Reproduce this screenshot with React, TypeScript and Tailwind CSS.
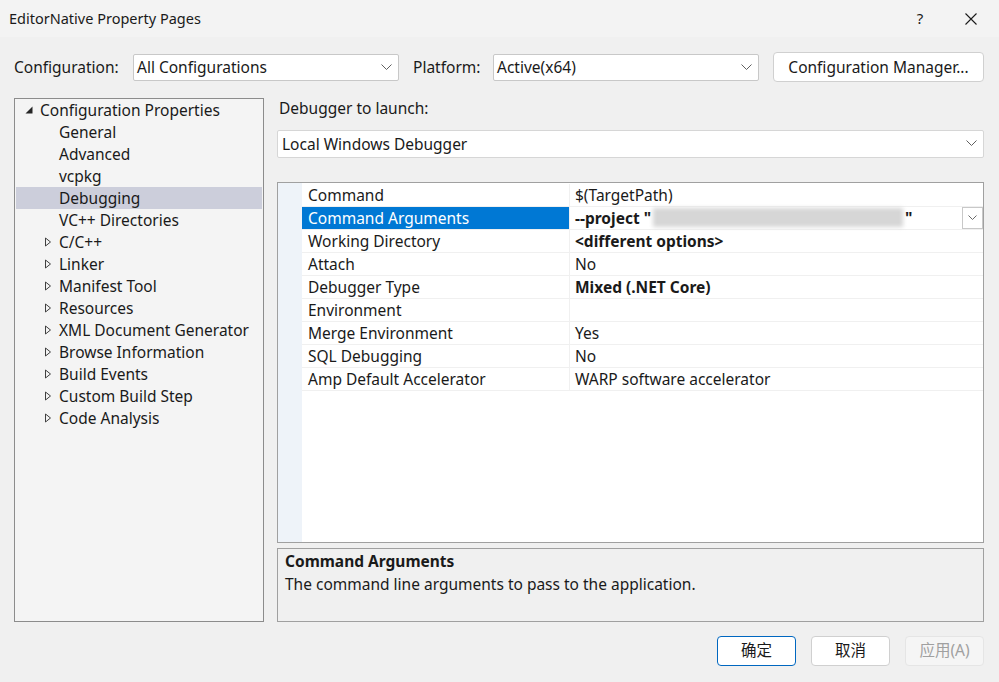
import React from "react";

const font = { fontFamily: '"Noto Sans", "Noto Sans CJK SC", sans-serif' };

const Chevron = () => (
  <svg width="11" height="7" viewBox="0 0 11 7" className="shrink-0">
    <path d="M0.5 0.5 L5.5 5.5 L10.5 0.5" fill="none" stroke="#5f5f5f" strokeWidth="1" />
  </svg>
);

const Collapsed = () => (
  <svg width="8" height="10" viewBox="0 0 8 10" className="shrink-0">
    <path d="M1.5 1 L6.5 5 L1.5 9 Z" fill="none" stroke="#404040" strokeWidth="1" />
  </svg>
);

const Expanded = () => (
  <svg width="8" height="8" viewBox="0 0 8 8" className="shrink-0">
    <path d="M7.5 0.5 L7.5 7.5 L0.5 7.5 Z" fill="#262626" />
  </svg>
);

const treeChildren = ["General", "Advanced", "vcpkg", "Debugging", "VC++ Directories"];
const treeGroups = [
  "C/C++",
  "Linker",
  "Manifest Tool",
  "Resources",
  "XML Document Generator",
  "Browse Information",
  "Build Events",
  "Custom Build Step",
  "Code Analysis",
];

const props: { name: string; value: string; bold?: boolean }[] = [
  { name: "Command", value: "$(TargetPath)" },
  { name: "Command Arguments", value: "" },
  { name: "Working Directory", value: "<different options>", bold: true },
  { name: "Attach", value: "No" },
  { name: "Debugger Type", value: "Mixed (.NET Core)", bold: true },
  { name: "Environment", value: "" },
  { name: "Merge Environment", value: "Yes" },
  { name: "SQL Debugging", value: "No" },
  { name: "Amp Default Accelerator", value: "WARP software accelerator" },
];

export default function App() {
  return (
    <div className="w-[999px] h-[682px] bg-[#f0f0f0] text-[15.5px] text-[#1a1a1a] flex flex-col overflow-hidden" style={font}>
      {/* title bar */}
      <div className="h-[37px] bg-[#f3f3f3] flex items-center pl-[9px] shrink-0">
        <span className="flex-1 text-[14.5px]">EditorNative Property Pages</span>
        <span className="w-[46px] text-center text-[15px]">?</span>
        <span className="w-[56px] flex justify-center">
          <svg width="12" height="12" viewBox="0 0 12 12">
            <path d="M0.5 0.5 L11.5 11.5 M11.5 0.5 L0.5 11.5" stroke="#1a1a1a" strokeWidth="1.1" />
          </svg>
        </span>
      </div>

      {/* configuration row */}
      <div className="flex items-center h-[30px] mt-[15px] pl-[14px] pr-[15px]">
        <span className="w-[119px] pt-[2px]">Configuration:</span>
        <div className="w-[266px] h-[27px] bg-white border border-[#c8c8c8] rounded-[2px] flex items-center pl-[3px] pr-[6px]">
          <span className="flex-1 pt-[2px]">All Configurations</span>
          <Chevron />
        </div>
        <span className="ml-[14px] w-[80px] pt-[2px]">Platform:</span>
        <div className="w-[266px] h-[27px] bg-white border border-[#c8c8c8] rounded-[2px] flex items-center pl-[3px] pr-[6px]">
          <span className="flex-1 pt-[2px]">Active(x64)</span>
          <Chevron />
        </div>
        <div className="ml-[14px] w-[211px] h-[30px] bg-white border border-[#d0d0d0] rounded-[4px] flex items-center justify-center pt-px">
          Configuration Manager...
        </div>
      </div>

      {/* main */}
      <div className="flex mt-[16px] pl-[14px] pr-[15px] gap-[13px] h-[524px]">
        {/* tree */}
        <div className="w-[250px] bg-[#f4f4f4] border border-[#8c8c8c] flex flex-col">
          <div className="h-[22px] flex items-center pl-[10px]">
            <Expanded />
            <span className="ml-[7px] pt-[2px]">Configuration Properties</span>
          </div>
          {treeChildren.map((c) => (
            <div
              key={c}
              className={`h-[22px] flex items-center pl-[43px] pt-[2px] mx-px ${c === "Debugging" ? "bg-[#cccedb]" : ""}`}
            >
              {c}
            </div>
          ))}
          {treeGroups.map((g) => (
            <div key={g} className="h-[22px] flex items-center pl-[29px]">
              <Collapsed />
              <span className="ml-[7px] pt-[2px]">{g}</span>
            </div>
          ))}
        </div>

        {/* right pane */}
        <div className="flex-1 flex flex-col">
          <div className="h-[20px] flex items-center pl-[2px] pt-[2px]">Debugger to launch:</div>
          <div className="mt-[12px] h-[28px] bg-white border border-[#d6d6d6] rounded-[2px] flex items-center pl-[4px] pr-[6px]">
            <span className="flex-1 pt-[2px]">Local Windows Debugger</span>
            <Chevron />
          </div>

          <div className="mt-[24px] h-[362px] bg-white border border-[#a0a0a0] flex">
            <div className="w-[24px] bg-[#eef3f9] shrink-0" />
            <div className="flex-1 flex flex-col pt-px">
              {props.map((p, i) => {
                const sel = i === 1;
                return (
                  <div key={p.name} className="h-[23px] flex border-b border-[#f0f0f0]">
                    <div
                      className={`w-[268px] shrink-0 flex items-center pl-[6px] pt-[2px] border-r border-[#f0f0f0] ${
                        sel ? "bg-[#0078d4] text-white" : ""
                      }`}
                    >
                      {p.name}
                    </div>
                    <div className={`flex-1 flex items-center pl-[5px] ${p.bold ? "font-bold" : ""}`}>
                      {sel ? (
                        <>
                          <span className="font-bold pt-[2px]">--project "</span>
                          <span className="w-[250px] h-[19px] bg-[#d6d6d6] blur-[2px] ml-[2px]" />
                          <span className="font-bold ml-[2px] pt-[2px]">"</span>
                          <span className="flex-1" />
                          <span className="w-[21px] h-[22px] border border-[#c8c8c8] flex items-center justify-center">
                            <svg width="9" height="5" viewBox="0 0 9 5">
                              <path d="M0.5 0.5 L4.5 4.5 L8.5 0.5" fill="none" stroke="#6a6a6a" />
                            </svg>
                          </span>
                        </>
                      ) : (
                        <span className="pt-[2px]">{p.value}</span>
                      )}
                    </div>
                  </div>
                );
              })}
            </div>
          </div>

          <div className="mt-[5px] h-[74px] bg-[#f0f0f0] border border-[#a0a0a0] px-[7px] pt-px">
            <div className="font-bold leading-[22px]">Command Arguments</div>
            <div className="leading-[22px] mt-px">The command line arguments to pass to the application.</div>
          </div>
        </div>
      </div>

      {/* buttons */}
      <div className="flex justify-end gap-[15px] pr-[15px] mt-[14px]">
        <div className="w-[79px] h-[30px] bg-white border border-[#0067c0] rounded-[4px] flex items-center justify-center">
          确定
        </div>
        <div className="w-[79px] h-[30px] bg-white border border-[#d0d0d0] rounded-[4px] flex items-center justify-center">
          取消
        </div>
        <div className="w-[79px] h-[30px] bg-[#f5f5f5] border border-[#e5e5e5] rounded-[4px] flex items-center justify-center text-[#a0a0a0]">
          应用(A)
        </div>
      </div>
    </div>
  );
}
